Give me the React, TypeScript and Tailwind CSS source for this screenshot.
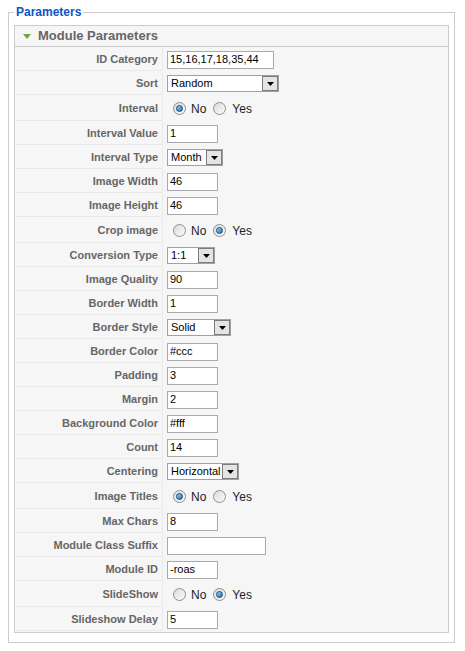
type Field =
  | { label: string; kind: "text"; value: string; w: string }
  | { label: string; kind: "select"; value: string; w: string }
  | { label: string; kind: "radio"; yes: boolean };

const fields: Field[] = [
  { label: "ID Category", kind: "text", value: "15,16,17,18,35,44", w: "w-[107px]" },
  { label: "Sort", kind: "select", value: "Random", w: "w-[112px]" },
  { label: "Interval", kind: "radio", yes: false },
  { label: "Interval Value", kind: "text", value: "1", w: "w-[51px]" },
  { label: "Interval Type", kind: "select", value: "Month", w: "w-[56px]" },
  { label: "Image Width", kind: "text", value: "46", w: "w-[51px]" },
  { label: "Image Height", kind: "text", value: "46", w: "w-[51px]" },
  { label: "Crop image", kind: "radio", yes: true },
  { label: "Conversion Type", kind: "select", value: "1:1", w: "w-[48px]" },
  { label: "Image Quality", kind: "text", value: "90", w: "w-[51px]" },
  { label: "Border Width", kind: "text", value: "1", w: "w-[51px]" },
  { label: "Border Style", kind: "select", value: "Solid", w: "w-[64px]" },
  { label: "Border Color", kind: "text", value: "#ccc", w: "w-[51px]" },
  { label: "Padding", kind: "text", value: "3", w: "w-[51px]" },
  { label: "Margin", kind: "text", value: "2", w: "w-[51px]" },
  { label: "Background Color", kind: "text", value: "#fff", w: "w-[51px]" },
  { label: "Count", kind: "text", value: "14", w: "w-[51px]" },
  { label: "Centering", kind: "select", value: "Horizontal", w: "w-[72px]" },
  { label: "Image Titles", kind: "radio", yes: false },
  { label: "Max Chars", kind: "text", value: "8", w: "w-[51px]" },
  { label: "Module Class Suffix", kind: "text", value: "", w: "w-[99px]" },
  { label: "Module ID", kind: "text", value: "-roas", w: "w-[51px]" },
  { label: "SlideShow", kind: "radio", yes: true },
  { label: "Slideshow Delay", kind: "text", value: "5", w: "w-[51px]" },
];

function Radio({ on }: { on: boolean }) {
  return (
    <span className="flex h-[13px] w-[13px] items-center justify-center rounded-full border border-[#8e8f8f] bg-gradient-to-br from-[#dcdcdc] to-[#fbfbfb]">
      {on && (
        <span className="h-[7px] w-[7px] rounded-full border border-[#0c4a73] bg-gradient-to-br from-[#9bd3f5] to-[#1b6fb2]" />
      )}
    </span>
  );
}

function Control({ f }: { f: Field }) {
  if (f.kind === "radio") {
    return (
      <div className="flex items-center pl-[6px] text-[12px] text-[#222]">
        <Radio on={!f.yes} />
        <span className="ml-[5px] mr-[7px]">No</span>
        <Radio on={f.yes} />
        <span className="ml-[6px]">Yes</span>
      </div>
    );
  }
  if (f.kind === "select") {
    return (
      <div className={`${f.w} flex h-[17px] items-center border border-[#a0a0a0] bg-white pl-[3px]`}>
        <span className="flex-1 text-[11px] leading-none text-black">{f.value}</span>
        <span className="flex h-[15px] w-[16px] items-center justify-center border border-[#7c7c7c] bg-[#e4e4e4]">
          <svg width="7" height="4" viewBox="0 0 7 4">
            <path d="M0 0h7L3.5 4z" fill="#000" />
          </svg>
        </span>
      </div>
    );
  }
  return (
    <div className={`${f.w} flex h-[18px] items-center border border-[#a9a9a9] bg-white px-[2px] text-[11px] leading-none text-black`}>
      {f.value}
    </div>
  );
}

export default function App() {
  return (
    <div className="w-[465px] bg-white pt-[5px] font-['Liberation_Sans',Arial,sans-serif]">
      <fieldset className="mx-2 w-[447px] border border-[#cccccc] px-[5px] pb-[9px]">
        <legend className="px-[2px] text-[12px] leading-[14px] font-bold text-[#0b55c4]">Parameters</legend>
        <div className="mt-[6px] border border-[#cccccc] bg-[#f6f6f6]">
          <div className="flex h-[21px] items-center gap-[7px] border-b border-[#cccccc] pl-[8px] text-[13px] font-bold text-[#666]">
            <svg width="8" height="5" viewBox="0 0 8 5">
              <path d="M0 0h8L4 5z" fill="#6cab3b" />
            </svg>
            Module Parameters
          </div>
          <div className="flex flex-col gap-[1px] p-[1px]">
            {fields.map((f) => (
              <div key={f.label} className={`flex ${f.kind === "radio" ? "h-[25px]" : "h-[23px]"}`}>
                <div className="flex w-[147px] items-center justify-end border-r border-b border-[#e9e9e9] pr-[4px] text-[11px] font-bold text-[#666]">
                  {f.label}
                </div>
                <div className="ml-[1px] flex flex-1 items-center pl-[3px]">
                  <Control f={f} />
                </div>
              </div>
            ))}
          </div>
        </div>
      </fieldset>
    </div>
  );
}
